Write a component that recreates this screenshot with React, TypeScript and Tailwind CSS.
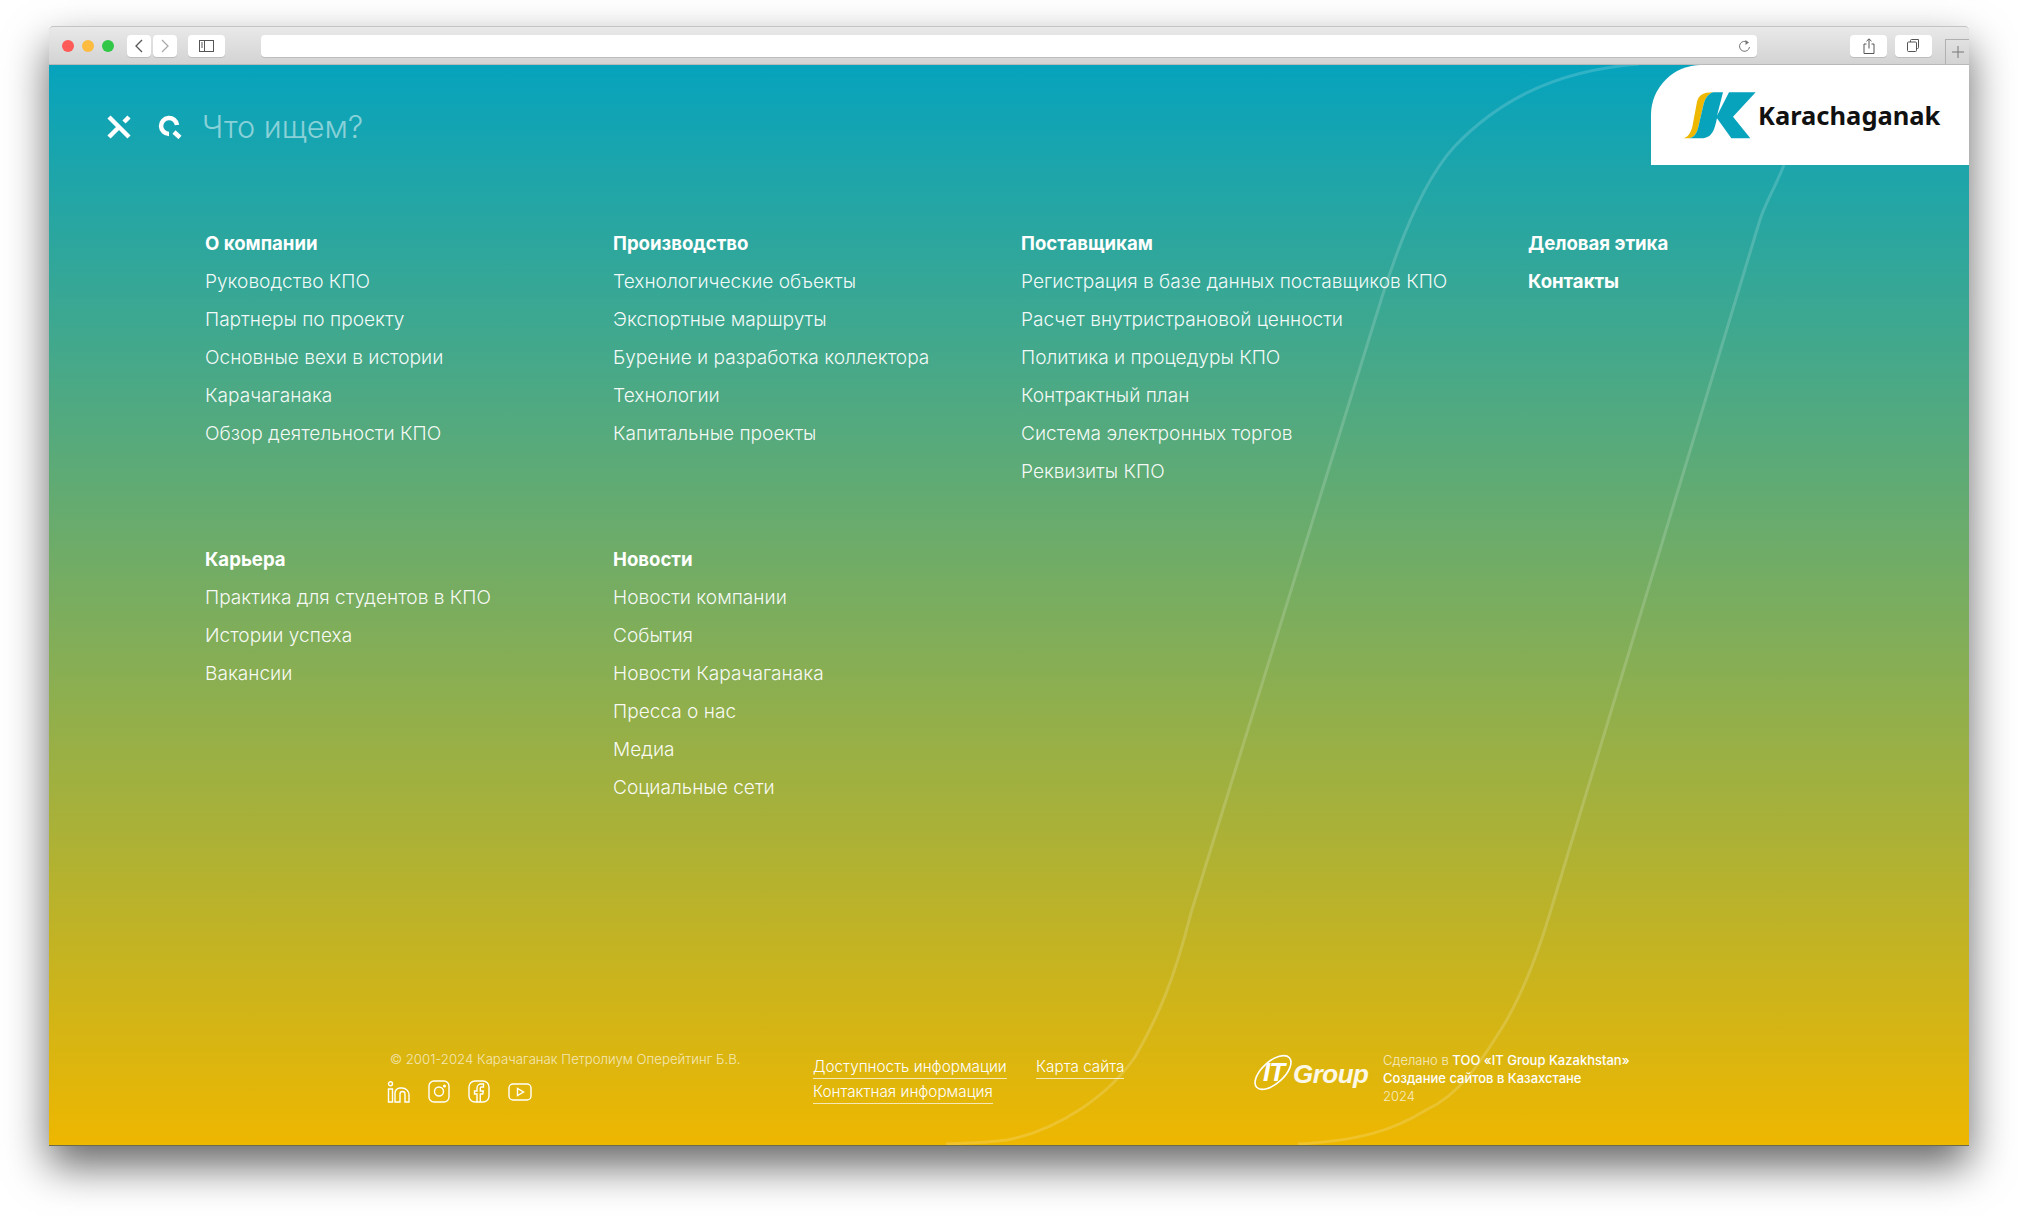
import React from "react";

const FONT = "font-['Inter','Noto_Sans',sans-serif]";

const columnsTop = [
  { w: "w-[408px]", title: "О компании", items: ["Руководство КПО", "Партнеры по проекту", "Основные вехи в истории", "Карачаганака", "Обзор деятельности КПО"] },
  { w: "w-[408px]", title: "Производство", items: ["Технологические объекты", "Экспортные маршруты", "Бурение и разработка коллектора", "Технологии", "Капитальные проекты"] },
  { w: "w-[507px]", title: "Поставщикам", items: ["Регистрация в базе данных поставщиков КПО", "Расчет внутристрановой ценности", "Политика и процедуры КПО", "Контрактный план", "Система электронных торгов", "Реквизиты КПО"] },
];
const columnsBottom = [
  { w: "w-[408px]", title: "Карьера", items: ["Практика для студентов в КПО", "Истории успеха", "Вакансии"] },
  { w: "w-[408px]", title: "Новости", items: ["Новости компании", "События", "Новости Карачаганака", "Пресса о нас", "Медиа", "Социальные сети"] },
];

function Heading({ children }: { children: React.ReactNode }) {
  return <div className="h-[38px] flex items-center text-[18.6px] font-bold text-white whitespace-nowrap">{children}</div>;
}

function Column({ w, title, items }: { w: string; title: string; items: string[] }) {
  return (
    <div className={w}>
      <Heading>{title}</Heading>
      {items.map((t) => (
        <div key={t} className="h-[38px] pb-[2px] flex items-center text-[19.1px] font-light text-white/95 whitespace-nowrap">{t}</div>
      ))}
    </div>
  );
}

function ToolButton({ className = "", children }: { className?: string; children?: React.ReactNode }) {
  return <div className={`h-[22px] rounded-[4px] bg-white shadow-[0_1px_0_#bdbdbd] flex items-center justify-center ${className}`}>{children}</div>;
}

function Toolbar() {
  return (
    <div className="relative h-[39px] shrink-0 flex items-center border-b border-[#b9b9b9] border-t border-t-[#c4c4c4] bg-gradient-to-b from-[#e9e9e9] to-[#d3d3d3] rounded-t-[4px]">
      <div className="flex gap-2 ml-[13px]">
        <span className="w-3 h-3 rounded-full bg-[#fc5b57]" />
        <span className="w-3 h-3 rounded-full bg-[#fdbc40]" />
        <span className="w-3 h-3 rounded-full bg-[#33c748]" />
      </div>
      <div className="flex gap-[2px] ml-[13px]">
        <ToolButton className="w-[24px]">
          <svg width="10" height="14" viewBox="0 0 10 14" fill="none" stroke="#555" strokeWidth="1.3"><path d="M8 1L2 7l6 6" /></svg>
        </ToolButton>
        <ToolButton className="w-[24px]">
          <svg width="10" height="14" viewBox="0 0 10 14" fill="none" stroke="#aaa" strokeWidth="1.3"><path d="M2 1l6 6-6 6" /></svg>
        </ToolButton>
      </div>
      <ToolButton className="w-[37px] ml-[11px]">
        <svg width="16" height="12" viewBox="0 0 16 12" fill="none" stroke="#555" strokeWidth="1"><rect x="0.5" y="0.5" width="14" height="11" /><path d="M5.5 0.5v11M2 3h2M2 5h2M2 7h2" /></svg>
      </ToolButton>
      <ToolButton className="w-[1496px] ml-[36px] justify-end pr-[6px]">
        <svg width="13" height="14" viewBox="0 0 13 14" fill="none" stroke="#777" strokeWidth="1"><path d="M9.8 3.5A5 5 0 1 0 11.5 8" /><path d="M7.5 1v5l3.5-2.5z" fill="#777" stroke="none" /></svg>
      </ToolButton>
      <ToolButton className="w-[37px] ml-[93px]">
        <svg width="12" height="16" viewBox="0 0 12 16" fill="none" stroke="#555" strokeWidth="1"><path d="M3.5 6H1v9.5h10V6H8.5M6 10.5V1M3.5 3.2L6 .8l2.500 2.400" /></svg>
      </ToolButton>
      <ToolButton className="w-[37px] ml-[8px]">
        <svg width="13" height="13" viewBox="0 0 13 13" fill="none" stroke="#555" strokeWidth="1"><rect x="0.500" y="3" width="9" height="9.500" rx="1" /><path d="M3.500 3V1.500a1 1 0 0 1 1-1h7v8a1 1 0 0 1-1 1H9.500" /></svg>
      </ToolButton>
      <div className="absolute right-0 bottom-0 w-[24px] h-[25px] border-l border-t border-[#b0b0b0] flex items-center justify-center">
        <svg width="12" height="12" viewBox="0 0 12 12" stroke="#777" strokeWidth="1"><path d="M6 0v12M0 6h12" /></svg>
      </div>
    </div>
  );
}

function Curves() {
  return (
    <svg className="absolute left-0 top-0 w-full h-full pointer-events-none" viewBox="0 0 1920 1080" fill="none" stroke="white" strokeOpacity="0.17" strokeWidth="3">
      <path d="M1590 -1C1500 6 1445 40 1405 82C1375 115 1352 172 1333 232L1142 848C1125 915 1110 950 1086 992C1060 1030 1010 1065 958 1075C935 1078 915 1078 897 1079" />
      <path d="M1735 100C1725 125 1715 140 1710 158L1501 848C1490 885 1475 925 1456 958C1430 1000 1410 1030 1377 1045C1345 1065 1310 1076 1249 1079" />
    </svg>
  );
}

function KLogo() {
  return (
    <svg width="100" height="60" viewBox="0 0 300 180" className="shrink-0">
      <path fill="#EEB700" d="M24 160C45 160 52 145 58 125L72 50C78 30 90 22 120 22C100 30 95 45 90 65L75 130C70 148 62 158 48 160Z" />
      <path fill="#07A3BD" d="M120 22H150L132 92L168 22H248L180 95L232 160H175L132 100C125 130 120 160 85 160H48C62 158 70 148 75 130L90 65C95 45 100 30 120 22Z" />
    </svg>
  );
}

function SocialIcons() {
  return (
    <div className="flex items-center gap-[18px] ml-[-3px] mt-[10px]">
      <svg width="23" height="22" viewBox="0 0 23 22" fill="none" stroke="white" strokeWidth="1.400">
        <circle cx="3.500" cy="2.800" r="2" />
        <path d="M1.500 8h4v13h-4zM8 21V12a5 5 0 0 1 5-5h2a7 7 0 0 1 7 7v7h-4v-8a2.500 2.500 0 0 0-5 0v8z" />
      </svg>
      <svg width="22" height="23" viewBox="0 0 22 23" fill="none" stroke="white" strokeWidth="1.400">
        <rect x="1" y="1" width="20" height="21" rx="5" />
        <circle cx="11" cy="11.500" r="4.500" />
        <circle cx="16.500" cy="6" r="0.800" fill="white" />
      </svg>
      <svg width="22" height="23" viewBox="0 0 22 23" fill="none" stroke="white" strokeWidth="1.400">
        <rect x="1" y="1" width="20" height="21" rx="6" />
        <path d="M9 22v-8H6.500v-3H9V8a4 4 0 0 1 4-4h2.500v3H13.500a1.200 1.200 0 0 0-1.200 1.200V11h3l-.5 3h-2.500v8" />
      </svg>
      <svg width="24" height="18" viewBox="0 0 24 18" fill="none" stroke="white" strokeWidth="1.400">
        <rect x="1" y="1" width="22" height="16" rx="4" />
        <path d="M9.500 5.500v7l6-3.500z" />
      </svg>
    </div>
  );
}

function ITGroupLogo() {
  return (
    <div className="relative w-[118px] h-[40px] shrink-0 -ml-[3px]">
      <svg className="absolute left-[3px] top-0" width="42" height="38" viewBox="0 0 42 38" fill="none" stroke="white" strokeWidth="1.600">
        <ellipse cx="20" cy="18.500" rx="11" ry="22" transform="rotate(48 20 18.500)" />
      </svg>
      <span className="absolute left-[13px] top-[3px] text-[26px] leading-[30px] font-['Liberation_Sans',sans-serif] italic font-bold text-white tracking-[-1px]">IT</span>
      <span className="absolute left-[43px] top-[5px] text-[26px] leading-[30px] font-['Liberation_Sans',sans-serif] italic font-bold text-white/90 tracking-[-0.5px]">Group</span>
    </div>
  );
}

export default function App() {
  return (
    <div className={`w-[2018px] h-[1216px] bg-white pt-[26px] pl-[49px] overflow-hidden ${FONT}`}>
      <div className="w-[1920px] h-[1120px] flex flex-col shadow-[0_20px_40px_rgba(0,0,0,0.6)]">
        <Toolbar />
        <main className="relative flex-1 flex flex-col bg-[linear-gradient(180deg,#06a3bd,#eeb700)] border-b border-[#6b6b4a]">
          <Curves />
          <header className="relative h-[124px] flex justify-between items-start">
            <div className="h-full flex items-center pl-[58px]">
              <svg width="24" height="24" viewBox="0 0 24 24" fill="none" stroke="white" strokeWidth="4.500">
                <path d="M2 2l20 20M22 2l-5 5M11 13L2 22" />
              </svg>
              <svg className="ml-[27px]" width="24" height="24" viewBox="0 0 24 24" fill="none" stroke="white" strokeWidth="4.500">
                <path d="M19 10A8 8 0 1 0 11 19M16 17l6 5.500" />
              </svg>
              <span className="ml-[20px] text-[30.700px] font-light text-white/50">Что ищем?</span>
            </div>
            <div className="w-[318px] h-[100px] bg-white rounded-tl-[50px] flex items-center pl-[22px] pb-[1px]">
              <KLogo />
              <span className="-ml-[15px] mt-[2px] text-[25.500px] font-bold font-['Noto_Sans',sans-serif] text-[#111]">Karachaganak</span>
            </div>
          </header>

          <section className="relative mt-[36px] pl-[156px]">
            <div className="flex">
              {columnsTop.map((c) => <Column key={c.title} {...c} />)}
              <div>
                <Heading>Деловая этика</Heading>
                <Heading>Контакты</Heading>
              </div>
            </div>
            <div className="flex mt-[50px]">
              {columnsBottom.map((c) => <Column key={c.title} {...c} />)}
            </div>
          </section>

          <footer className="relative mt-auto h-[95px] pl-[341px] flex items-start">
            <div className="w-[423px]">
              <div className="h-[20px] flex items-center text-[13.200px] font-light text-white/70 whitespace-nowrap">© 2001-2024 Карачаганак Петролиум Оперейтинг Б.В.</div>
              <SocialIcons />
            </div>
            <div className="w-[440px] pt-[6px] flex flex-wrap text-[15.300px] font-light text-white">
              <div className="w-[223px]"><span className="inline-block h-[23px] leading-[22px] border-b border-white/70 whitespace-nowrap">Доступность информации</span></div>
              <div className="w-[120px]"><span className="inline-block h-[23px] leading-[22px] border-b border-white/70 whitespace-nowrap">Карта сайта</span></div>
              <div className="w-full mt-[2px]"><span className="inline-block h-[23px] leading-[22px] border-b border-white/70 whitespace-nowrap">Контактная информация</span></div>
            </div>
            <div className="flex items-start pt-[4px]">
              <ITGroupLogo />
              <div className="ml-[15px] -mt-[4px] text-[13px] leading-[18px] text-white font-medium whitespace-nowrap">
                <div className="h-[20px] flex items-center"><span className="font-light text-white/75">Сделано в&nbsp;</span>ТОО «IT Group Kazakhstan»</div>
                <div className="h-[16px] flex items-center">Создание сайтов в Казахстане</div>
                <div className="h-[20px] flex items-center font-light text-white/75">2024</div>
              </div>
            </div>
          </footer>
        </main>
      </div>
    </div>
  );
}
